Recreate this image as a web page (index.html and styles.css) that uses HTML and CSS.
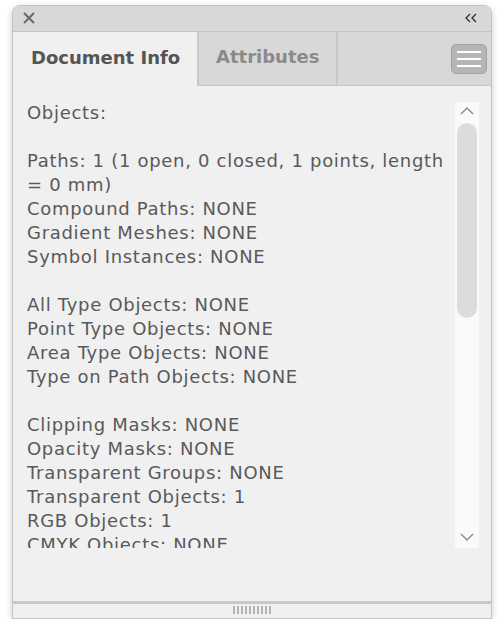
FILE: index.html
```html
<!DOCTYPE html>
<html lang="en">
<head>
  <meta charset="UTF-8">
  <meta name="viewport" content="width=device-width, initial-scale=1.0">
  <title>Document Info</title>
  <link rel="stylesheet" href="styles.css">
</head>
<body>
  <div class="panel">
    <div class="titlebar">
      <svg class="close" width="14" height="14" viewBox="0 0 14 14">
        <path d="M2 2 L12 12 M12 2 L2 12" stroke="#6a6a6a" stroke-width="2" fill="none"/>
      </svg>
      <svg class="collapse" width="14" height="10" viewBox="0 0 14 10">
        <path d="M6 1 L2 5 L6 9 M12 1 L8 5 L12 9" stroke="#333" stroke-width="1.4" fill="none"/>
      </svg>
    </div>
    <div class="tabs">
      <div class="tab active">Document Info</div>
      <div class="tab">Attributes</div>
      <div class="tab-fill">
        <div class="menu-btn">
          <span></span><span></span><span></span>
        </div>
      </div>
    </div>
    <div class="content">
      <div class="info">
        <div class="text">
          <p>Objects:</p>
          <p>&nbsp;</p>
          <p>Paths: 1 (1 open, 0 closed, 1 points, length = 0 mm)</p>
          <p>Compound Paths: NONE</p>
          <p>Gradient Meshes: NONE</p>
          <p>Symbol Instances: NONE</p>
          <p>&nbsp;</p>
          <p>All Type Objects: NONE</p>
          <p>Point Type Objects: NONE</p>
          <p>Area Type Objects: NONE</p>
          <p>Type on Path Objects: NONE</p>
          <p>&nbsp;</p>
          <p>Clipping Masks: NONE</p>
          <p>Opacity Masks: NONE</p>
          <p>Transparent Groups: NONE</p>
          <p>Transparent Objects: 1</p>
          <p>RGB Objects: 1</p>
          <p>CMYK Objects: NONE</p>
        </div>
        <div class="scrollbar">
          <svg class="arrow" width="16" height="10" viewBox="0 0 16 10">
            <path d="M2 8 L8 2 L14 8" stroke="#8a8a8a" stroke-width="1.4" fill="none"/>
          </svg>
          <div class="track">
            <div class="thumb"></div>
          </div>
          <svg class="arrow" width="16" height="10" viewBox="0 0 16 10">
            <path d="M2 2 L8 8 L14 2" stroke="#8a8a8a" stroke-width="1.4" fill="none"/>
          </svg>
        </div>
      </div>
    </div>
    <div class="footer">
      <div class="grip">
        <span></span><span></span><span></span><span></span><span></span><span></span><span></span><span></span><span></span><span></span>
      </div>
    </div>
  </div>
</body>
</html>
```

FILE: styles.css
```css
* {
  margin: 0;
  padding: 0;
  box-sizing: border-box;
}

body {
  background-color: #ffffff;
  font-family: "DejaVu Sans", sans-serif;
  padding: 5px 0 0 12px;
}

.panel {
  width: 480px;
  height: 614px;
  border: 1px solid #c4c4c4;
  border-radius: 8px 8px 0 0;
  background-color: #f0f0f0;
  box-shadow: 0 2px 6px rgba(0, 0, 0, 0.22);
  overflow: hidden;
  display: flex;
  flex-direction: column;
}

.titlebar {
  height: 26px;
  background-color: #d8d8d8;
  border-bottom: 1px solid #c6c6c6;
  display: flex;
  justify-content: space-between;
  align-items: center;
  padding: 0 13px 2px 9px;
}

.tabs {
  height: 54px;
  display: flex;
  background-color: #d8d8d8;
}

.tab {
  font-weight: bold;
  font-size: 18px;
  color: #8a8a8a;
  display: flex;
  align-items: center;
  padding-left: 17px;
  padding-bottom: 4px;
  width: 139px;
  border-right: 2px solid #c8c8c8;
  border-bottom: 1px solid #c4c4c4;
}

.tab.active {
  width: 186px;
  background-color: #f0f0f0;
  color: #555555;
  border-bottom: none;
  padding-left: 18px;
}

.tab-fill {
  flex: 1;
  display: flex;
  justify-content: flex-end;
  align-items: center;
  padding-right: 4px;
  border-bottom: 1px solid #c4c4c4;
}

.menu-btn {
  width: 36px;
  height: 30px;
  background-color: #b5b5b5;
  border: 1px solid #a2a2a2;
  border-radius: 5px;
  display: flex;
  flex-direction: column;
  justify-content: center;
  align-items: center;
  gap: 5px;
}

.menu-btn span {
  display: block;
  width: 24px;
  height: 2px;
  background-color: #ffffff;
}

.content {
  flex: 1;
  padding-top: 15px;
  border-bottom: 3px solid #c8c8c8;
}

.info {
  height: 447px;
  display: flex;
}

.text {
  flex: 1;
  overflow: hidden;
  padding-left: 14px;
  padding-right: 6px;
  font-size: 18px;
  line-height: 24px;
  letter-spacing: 0.7px;
  color: #595959;
}

.scrollbar {
  width: 24px;
  margin-right: 12px;
  margin-top: 1px;
  background-color: #fafafa;
  display: flex;
  flex-direction: column;
  align-items: center;
}

.arrow {
  margin: 4px 0 6px;
}

.scrollbar .arrow:last-child {
  margin: 6px 0 6px;
}

.track {
  flex: 1;
  width: 20px;
}

.thumb {
  margin-top: 1px;
  height: 195px;
  background-color: #dcdcdc;
  border-radius: 10px;
}

.footer {
  height: 14px;
  display: flex;
  justify-content: center;
  padding-top: 2px;
}

.grip {
  display: flex;
  gap: 2px;
  height: 8px;
}

.grip span {
  width: 2px;
  background-color: #b4b4b4;
}
```
